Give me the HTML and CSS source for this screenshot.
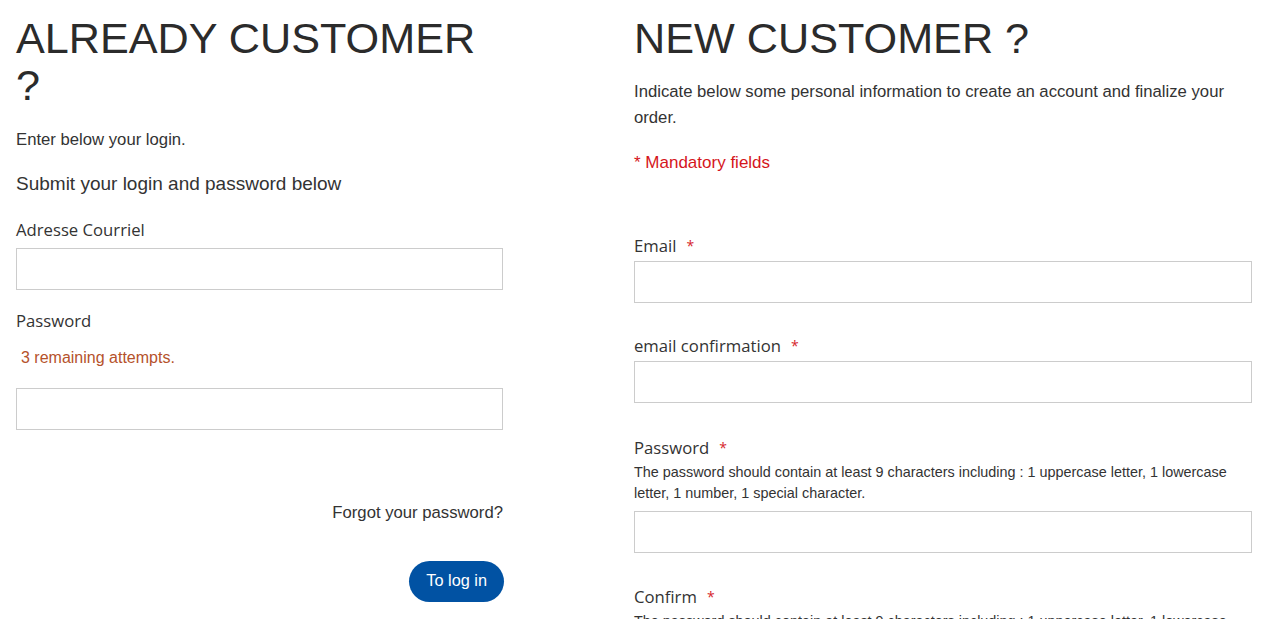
FILE: index.html
```html
<!DOCTYPE html>
<html lang="en">
<head>
<meta charset="utf-8">
<title>Login</title>
<link rel="stylesheet" href="styles.css">
</head>
<body>
<main class="page">
  <section class="col col-login">
    <h1 class="title">ALREADY CUSTOMER ?</h1>
    <p class="intro">Enter below your login.</p>
    <h2 class="subtitle">Submit your login and password below</h2>
    <label class="field-label lbl-mail" for="login-mail">Adresse Courriel</label>
    <input class="field-input in-mail" id="login-mail" type="text">
    <label class="field-label lbl-pass" for="login-pass">Password</label>
    <p class="attempts">3 remaining attempts.</p>
    <input class="field-input in-pass" id="login-pass" type="password">
    <div class="forgot-row"><a class="forgot" href="#">Forgot your password?</a></div>
    <div class="btn-row"><button class="btn-login" type="button">To log in</button></div>
  </section>
  <section class="col col-new">
    <h1 class="title">NEW CUSTOMER ?</h1>
    <p class="lead">Indicate below some personal information to create an account and finalize your order.</p>
    <p class="mandatory">* Mandatory fields</p>
    <div class="group g-email">
      <label class="field-label r-label" for="n-email">Email<span class="req">*</span></label>
      <input class="field-input r-input" id="n-email" type="text">
    </div>
    <div class="group g-confirm">
      <label class="field-label r-label" for="n-email2">email confirmation<span class="req">*</span></label>
      <input class="field-input r-input" id="n-email2" type="text">
    </div>
    <div class="group g-pass">
      <label class="field-label r-label" for="n-pass">Password<span class="req">*</span></label>
      <p class="help">The password should contain at least 9 characters including : 1 uppercase letter, 1 lowercase letter, 1 number, 1 special character.</p>
      <input class="field-input r-input help-input" id="n-pass" type="password">
    </div>
    <div class="group g-pass2">
      <label class="field-label r-label" for="n-pass2">Confirm<span class="req">*</span></label>
      <p class="help">The password should contain at least 9 characters including : 1 uppercase letter, 1 lowercase letter, 1 number, 1 special character.</p>
      <input class="field-input r-input help-input" id="n-pass2" type="password">
    </div>
  </section>
</main>
</body>
</html>
```
FILE: styles.css
```css
* { box-sizing: border-box; }
html, body { margin: 0; padding: 0; background: #fff; }
body {
  font-family: "Liberation Sans", Arial, sans-serif;
  color: #333;
  overflow: hidden;
}
.page {
  display: grid;
  grid-template-columns: 487px 618px;
  column-gap: 131px;
  padding: 0 32px 0 16px;
}
.col { display: flex; flex-direction: column; min-width: 0; }
.title {
  margin: 15px 0 0;
  font-family: "Liberation Sans", Arial, sans-serif;
  font-weight: 400;
  font-size: 43.2px;
  line-height: 47px;
  color: #2b2b2b;
}
.intro {
  margin: 19px 0 0;
  font-size: 16.7px;
  line-height: 24px;
}
.subtitle {
  margin: 19px 0 0;
  font-weight: 400;
  font-size: 19px;
  line-height: 26px;
}
.field-label {
  display: block;
  font-family: "Open Sans", sans-serif;
  font-size: 16.7px;
  line-height: 24px;
  color: #333;
}
.lbl-mail { margin-top: 21px; }
.field-input {
  display: block;
  width: 100%;
  height: 42px;
  border: 1px solid #cccccc;
  background: #fff;
  margin: 0;
  padding: 0 10px;
  font: inherit;
}
.in-mail { margin-top: 6px; }
.lbl-pass { margin-top: 19px; }
.attempts {
  margin: 13px 0 0;
  padding-left: 5px;
  font-size: 16px;
  line-height: 24px;
  color: #b5522b;
}
.in-pass { margin-top: 18px; }
.forgot-row {
  margin-top: 71px;
  display: flex;
  justify-content: flex-end;
  line-height: 24px;
}
.forgot {
  font-size: 16.7px;
  color: #333;
  text-decoration: none;
}
.btn-row {
  margin-top: 36px;
  display: flex;
  justify-content: flex-end;
}
.btn-login {
  margin-right: -1px;
  height: 41px;
  padding: 8px 17px 11px;
  border: 0;
  border-radius: 21px;
  background: #0152a3;
  color: #fff;
  font-family: "Liberation Sans", Arial, sans-serif;
  font-size: 16.3px;
  line-height: 22px;
  cursor: pointer;
}
.lead {
  margin: 16.5px 0 0;
  font-size: 16.7px;
  line-height: 26px;
}
.mandatory {
  margin: 20.5px 0 0;
  font-size: 17px;
  line-height: 24px;
  color: #d5161c;
}
.group { display: flex; flex-direction: column; }
.g-email { margin-top: 59px; }
.g-confirm { margin-top: 31px; }
.g-pass { margin-top: 33px; }
.g-pass2 { margin-top: 32px; }
.r-input { margin-top: 3px; }
.req {
  margin-left: 10px;
  color: #d6262b;
  font-size: 14px;
  vertical-align: 1px;
}
.help {
  margin: 2px 0 0;
  font-size: 14.4px;
  line-height: 21px;
  color: #333;
}
.help-input { margin-top: 7px; }
```
